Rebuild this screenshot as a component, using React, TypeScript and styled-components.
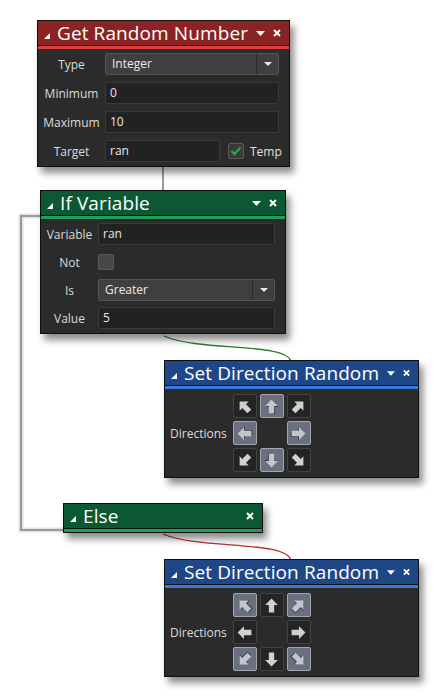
import React from 'react';
import styled, { createGlobalStyle } from 'styled-components';

const GlobalStyle = createGlobalStyle`
  html, body {
    margin: 0;
    padding: 0;
    background: #ffffff;
  }
  body {
    font-family: 'Open Sans', 'Noto Sans', 'DejaVu Sans', sans-serif;
  }
`;

type Tone = 'red' | 'green' | 'blue';

const tones: Record<Tone, { head: string; stripe: string }> = {
  red: { head: '#8a2323', stripe: '#de3f3f' },
  green: { head: '#0b5833', stripe: '#1f9f58' },
  blue: { head: '#1f4788', stripe: '#3a7bdc' },
};

// 캔버스 (다이어그램 노드는 좌표가 곧 내용)
const Canvas = styled.div`
  position: relative;
  width: 439px;
  height: 699px;
  background: #ffffff;
  overflow: hidden;
`;

const Wires = styled.svg`
  position: absolute;
  left: 0;
  top: 0;
  width: 439px;
  height: 699px;
`;

const Node = styled.div<{ $x: number; $y: number; $w: number }>`
  position: absolute;
  left: ${(p) => p.$x}px;
  top: ${(p) => p.$y}px;
  width: ${(p) => p.$w}px;
  background: #2b2b2b;
  border: 1px solid #0f0f0f;
  box-shadow: 4px 6px 7px rgba(0, 0, 0, 0.45);
`;

const Header = styled.div<{ $tone: Tone }>`
  height: 24px;
  display: flex;
  align-items: center;
  padding: 0 8px 0 6px;
  background: ${(p) => tones[p.$tone].head};
  border-bottom: 1px solid #121212;
  color: #fff;
`;

const Stripe = styled.div<{ $tone: Tone }>`
  height: 3px;
  background: ${(p) => tones[p.$tone].stripe};
`;

const Collapse = styled.span`
  width: 0;
  height: 0;
  border-left: 6px solid transparent;
  border-bottom: 6px solid #fff;
  margin: 6px 7px 0 0;
`;

const Title = styled.span`
  flex: 1;
  font-size: 19px;
  line-height: 24px;
  white-space: nowrap;
  letter-spacing: 0.1px;
`;

const HeadIcon = styled.svg`
  display: block;
  margin-left: 8px;
`;

const Body = styled.div<{ $gap: number }>`
  display: flex;
  flex-direction: column;
  gap: ${(p) => p.$gap}px;
  padding: 4px 10px 4px 0;
`;

const Row = styled.div<{ $label: number }>`
  display: grid;
  grid-template-columns: ${(p) => p.$label}px 1fr;
  align-items: center;
  height: 22px;
`;

const Label = styled.span`
  text-align: center;
  font-size: 12px;
  color: #dcdcdc;
  white-space: nowrap;
`;

const Field = styled.div<{ $w?: number }>`
  box-sizing: border-box;
  height: 22px;
  width: ${(p) => (p.$w ? `${p.$w}px` : '100%')};
  background: #222222;
  border: 1px solid #3a3a3a;
  border-radius: 2px;
  padding: 0 4px;
  font-size: 12px;
  line-height: 20px;
  color: #e8e8e8;
`;

const Select = styled.div`
  box-sizing: border-box;
  height: 22px;
  display: flex;
  background: #3f3f3f;
  border: 1px solid #555555;
  border-radius: 2px;
  font-size: 12px;
  color: #ececec;
`;

const SelectText = styled.span`
  flex: 1;
  padding: 0 6px;
  line-height: 20px;
`;

const SelectArrow = styled.span`
  width: 21px;
  display: flex;
  align-items: center;
  justify-content: center;
  border-left: 1px solid #2a2a2a;

  &::after {
    content: '';
    border-left: 4px solid transparent;
    border-right: 4px solid transparent;
    border-top: 4px solid #e8e8e8;
  }
`;

const Inline = styled.div`
  display: flex;
  align-items: center;
`;

const Check = styled.span<{ $on?: boolean; $first?: boolean }>`
  box-sizing: border-box;
  width: 16px;
  height: 16px;
  margin-left: ${(p) => (p.$first ? 0 : 8)}px;
  border-radius: 2px;
  background: ${(p) => (p.$on ? '#3a3a3a' : '#464646')};
  border: 1px solid ${(p) => (p.$on ? '#5a5a5a' : '#595959')};
  display: flex;
  align-items: center;
  justify-content: center;
`;

const CheckText = styled.span`
  margin-left: 6px;
  font-size: 12px;
  color: #e0e0e0;
`;

const DirBody = styled.div`
  display: flex;
  align-items: center;
  padding: 5px 0 5px 5px;
`;

const DirLabel = styled.span`
  font-size: 12px;
  color: #dcdcdc;
  margin-right: 6px;
`;

const DirGrid = styled.div`
  display: grid;
  grid-template-columns: repeat(3, 24px);
  grid-auto-rows: 24px;
  gap: 3px;
`;

const DirButton = styled.div<{ $on?: boolean; $empty?: boolean }>`
  box-sizing: border-box;
  border-radius: 2px;
  display: flex;
  align-items: center;
  justify-content: center;
  background: ${(p) => (p.$empty ? 'transparent' : p.$on ? '#6a7080' : '#242424')};
  border: 1px solid ${(p) => (p.$empty ? 'transparent' : p.$on ? '#a2a6b0' : '#434343')};
`;

const Dropdown = () => (
  <HeadIcon width="9" height="5" viewBox="0 0 9 5">
    <path d="M0 0 H9 L4.5 5 Z" fill="#fff" />
  </HeadIcon>
);

const Close = () => (
  <HeadIcon width="8" height="8" viewBox="0 0 8 8">
    <path d="M1 1 L7 7 M7 1 L1 7" stroke="#fff" strokeWidth="2" />
  </HeadIcon>
);

const angles: Record<string, number> = {
  nw: -45, n: 0, ne: 45, w: -90, e: 90, sw: -135, s: 180, se: 135,
};

const arrowPath = 'M8 1.5 L2 7.5 H5.5 V14.5 H10.5 V7.5 H14 Z';

const Arrow = ({ dir, on }: { dir: string; on?: boolean }) => (
  <svg width="17" height="17" viewBox="0 0 16 16">
    <g transform={`rotate(${angles[dir]} 8 8)`}>
      {on && <path d={arrowPath} fill="#3a3d45" transform="translate(0.9 0.9)" />}
      <path d={arrowPath} fill={on ? '#c2c5cc' : '#d0d0d0'} />
    </g>
  </svg>
);

const order = ['nw', 'n', 'ne', 'w', '', 'e', 'sw', 's', 'se'];

const Directions = ({ active }: { active: string[] }) => (
  <DirBody>
    <DirLabel>Directions</DirLabel>
    <DirGrid>
      {order.map((d, i) =>
        d ? (
          <DirButton key={i} $on={active.includes(d)}>
            <Arrow dir={d} on={active.includes(d)} />
          </DirButton>
        ) : (
          <DirButton key={i} $empty />
        ),
      )}
    </DirGrid>
  </DirBody>
);

const NodeHead = ({ tone, title, menu = true }: { tone: Tone; title: string; menu?: boolean }) => (
  <>
    <Header $tone={tone}>
      <Collapse />
      <Title>{title}</Title>
      {menu && <Dropdown />}
      <Close />
    </Header>
    <Stripe $tone={tone} />
  </>
);

const App: React.FC = () => {
  return (
    <>
      <GlobalStyle />
      <Canvas>
        <Wires viewBox="0 0 439 699">
          <path d="M40 216 H21 V530 H64" fill="none" stroke="#e2e2e2" strokeWidth="5" />
          <path d="M40 216 H21 V530 H64" fill="none" stroke="#9a9a9a" strokeWidth="2" />
          <path d="M163 167 V191" stroke="#9a9a9a" strokeWidth="2" />
          <path d="M164 336 C 200 352, 288 342, 291 362" fill="none" stroke="#2a7d34" strokeWidth="1.3" />
          <path d="M163 534 C 200 550, 288 540, 291 561" fill="none" stroke="#b83030" strokeWidth="1.3" />
        </Wires>

        <Node $x={37} $y={20} $w={251}>
          <NodeHead tone="red" title="Get Random Number" />
          <Body $gap={7}>
            <Row $label={67}>
              <Label>Type</Label>
              <Select>
                <SelectText>Integer</SelectText>
                <SelectArrow />
              </Select>
            </Row>
            <Row $label={67}>
              <Label>Minimum</Label>
              <Field>0</Field>
            </Row>
            <Row $label={67}>
              <Label>Maximum</Label>
              <Field>10</Field>
            </Row>
            <Row $label={67}>
              <Label>Target</Label>
              <Inline>
                <Field $w={115}>ran</Field>
                <Check $on>
                  <svg width="12" height="10" viewBox="0 0 12 10">
                    <path d="M1.5 5 L4.5 8 L10.5 1.5" fill="none" stroke="#2fa45c" strokeWidth="2.4" />
                  </svg>
                </Check>
                <CheckText>Temp</CheckText>
              </Inline>
            </Row>
          </Body>
        </Node>

        <Node $x={40} $y={190} $w={244}>
          <NodeHead tone="green" title="If Variable" />
          <Body $gap={6}>
            <Row $label={57}>
              <Label>Variable</Label>
              <Field>ran</Field>
            </Row>
            <Row $label={57}>
              <Label>Not</Label>
              <Inline>
                <Check $first />
              </Inline>
            </Row>
            <Row $label={57}>
              <Label>Is</Label>
              <Select>
                <SelectText>Greater</SelectText>
                <SelectArrow />
              </Select>
            </Row>
            <Row $label={57}>
              <Label>Value</Label>
              <Field>5</Field>
            </Row>
          </Body>
        </Node>

        <Node $x={164} $y={360} $w={253}>
          <NodeHead tone="blue" title="Set Direction Random" />
          <Directions active={['n', 'w', 'e', 's']} />
        </Node>

        <Node $x={63} $y={503} $w={198}>
          <NodeHead tone="green" title="Else" menu={false} />
        </Node>

        <Node $x={164} $y={559} $w={253}>
          <NodeHead tone="blue" title="Set Direction Random" />
          <Directions active={['nw', 'ne', 'sw', 'se']} />
        </Node>
      </Canvas>
    </>
  );
};

export default App;
